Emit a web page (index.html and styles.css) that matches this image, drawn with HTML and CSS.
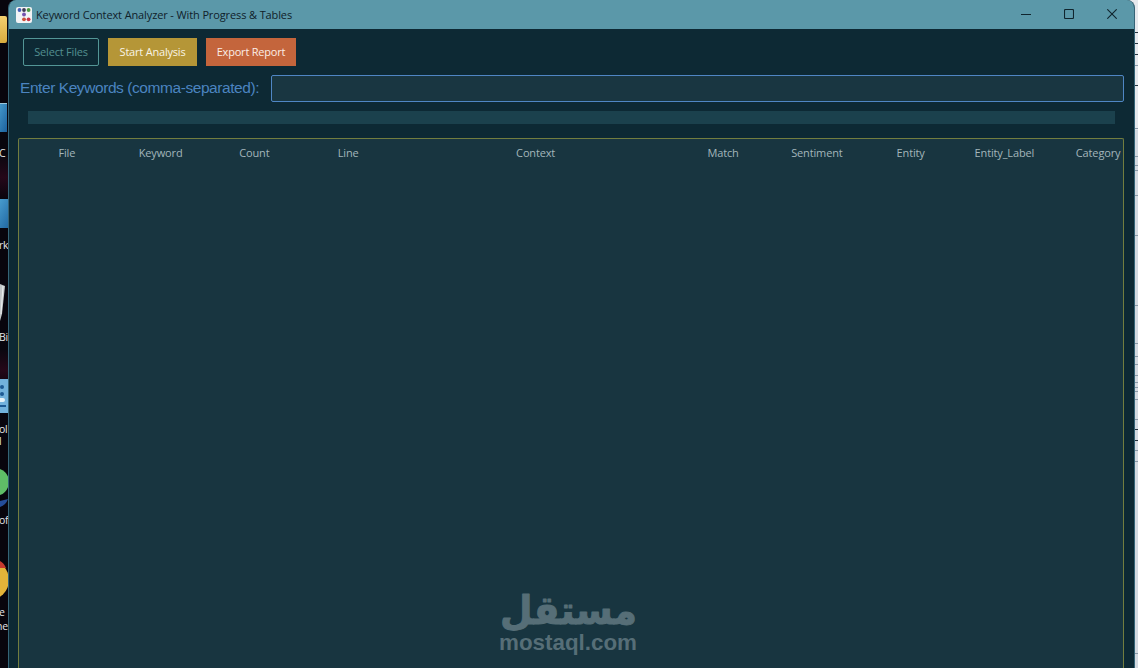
FILE: index.html
```html
<!DOCTYPE html>
<html lang="en">

<head>
    <meta charset="UTF-8">
    <meta name="viewport" content="width=device-width, initial-scale=1.0">
    <title>Keyword Context Analyzer</title>
    <link rel="stylesheet" href="styles.css">
</head>

<body>
    <div class="desktop">
        <!-- Desktop icons, mostly hidden behind the window -->
        <svg class="shortcuts" width="12" height="668" viewBox="0 0 12 668">
            <defs>
                <linearGradient id="folder" x1="0" y1="0" x2="0" y2="1">
                    <stop offset="0" stop-color="#f3d070" />
                    <stop offset="1" stop-color="#d9ab3e" />
                </linearGradient>
                <linearGradient id="screen" x1="0" y1="0" x2="1" y2="1">
                    <stop offset="0" stop-color="#4ea5d5" />
                    <stop offset="1" stop-color="#1c619d" />
                </linearGradient>
                <linearGradient id="glow" x1="0" y1="0" x2="0" y2="1">
                    <stop offset="0" stop-color="#0b0810" />
                    <stop offset=".5" stop-color="#250819" />
                    <stop offset="1" stop-color="#08050d" />
                </linearGradient>
            </defs>
            <rect y="155" width="12" height="45" fill="url(#glow)" />
            <rect y="350" width="12" height="40" fill="url(#glow)" />
            <rect x="-4" y="16" width="11" height="27" rx="2" fill="url(#folder)" />
            <rect x="-4" y="103" width="11" height="29" fill="url(#screen)" />
            <path d="M0 103.500H7" stroke="#9cc7dc" />
            <rect x="-4" y="199" width="16" height="29" fill="url(#screen)" />
            <path d="M0 284L5 286L2 314L0 321Z" fill="#c2c6c8" />
            <path d="M3 286L1 314" stroke="#ecefef" />
            <rect x="-4" y="379" width="16" height="34" fill="#72b2dc" />
            <g fill="#1d5a93">
                <circle cx="2" cy="387" r="2" />
                <circle cx="2" cy="394" r="2" />
                <rect y="405" width="6" height="2" />
            </g>
            <rect x="-2" y="398" width="7" height="4" rx="2" fill="#e5f1f6" />
            <circle cx="-5" cy="482" r="14" fill="#5fbd67" />
            <path d="M0 501L8 499Q6 505 0 507Z" fill="#244d9a" />
            <circle cx="-11" cy="580" r="20" fill="#e3b439" />
            <path d="M0 561Q4 563 6 568H0Z" fill="#c7392e" />
            <g class="shortcut-label">
                <text x="-1" y="157">C</text>
                <text x="-1" y="249">rk</text>
                <text x="-1" y="341">Bi</text>
                <text x="-1" y="433">ol</text>
                <text x="-1" y="445">l</text>
                <text x="-1" y="524">of</text>
                <text x="-1" y="616">e</text>
                <text x="-4" y="630">ne</text>
            </g>
        </svg>

        <main class="window">
            <header class="titlebar">
                <svg class="app-icon" width="16" height="16" viewBox="0 0 16 16">
                    <rect width="16" height="16" rx="2" fill="#f2f3f5" />
                    <circle cx="3.500" cy="3" r="1.900" fill="#4860b5" />
                    <circle cx="8" cy="3" r="1.900" fill="#3f3b55" />
                    <circle cx="12.600" cy="3" r="1.900" fill="#4b9a43" />
                    <circle cx="8" cy="7.500" r="1.900" fill="#7452ae" />
                    <circle cx="8" cy="12.300" r="1.900" fill="#cd513c" />
                    <circle cx="12.600" cy="12.300" r="1.900" fill="#c83246" />
                </svg>
                <h1 class="title">Keyword Context Analyzer - With Progress &amp; Tables</h1>
                <div class="controls">
                    <svg width="10" height="10" viewBox="0 0 10 10"><path d="M0 5.500H10" /></svg>
                    <svg width="10" height="10" viewBox="0 0 10 10"><rect x=".5" y=".5" width="9" height="9" rx="1" /></svg>
                    <svg width="10" height="10" viewBox="0 0 10 10"><path d="M.3 .3L9.700 9.700M9.700 .3L.3 9.700" /></svg>
                </div>
            </header>

            <div class="toolbar">
                <button class="btn btn-select">Select Files</button>
                <button class="btn btn-start">Start Analysis</button>
                <button class="btn btn-export">Export Report</button>
            </div>

            <div class="keywords">
                <label class="keywords-label" for="keywords">Enter Keywords (comma-separated):</label>
                <input class="keywords-input" id="keywords" type="text">
            </div>

            <div class="progress"></div>

            <section class="results">
                <div class="results-head">
                    <span>File</span>
                    <span>Keyword</span>
                    <span>Count</span>
                    <span>Line</span>
                    <span>Context</span>
                    <span>Match</span>
                    <span>Sentiment</span>
                    <span>Entity</span>
                    <span>Entity_Label</span>
                    <span>Category</span>
                </div>
            </section>
        </main>

        <!-- Edge of the document behind the window -->
        <svg class="behind" width="3" height="668" viewBox="0 0 3 668">
            <rect width="4" height="668" fill="#d3dae1" />
            <rect width="4" height="130" fill="#e6e9ed" />
            <g fill="#26343f">
                <rect y="32" width="4" height="1" />
                <rect y="43" width="4" height="1" />
                <rect y="54" width="4" height="1" />
                <rect y="85" width="4" height="1" />
                <rect y="429" width="4" height="1" />
                <rect y="440" width="4" height="1" />
            </g>
            <g fill="#8b9aa8">
                <rect y="65" width="4" height="1" />
                <rect y="128" width="4" height="1" />
                <rect y="156" width="4" height="1" />
                <rect y="165" width="4" height="1" />
                <rect y="170" width="4" height="1" />
                <rect y="195" width="4" height="1" />
                <rect y="235" width="4" height="1" />
                <rect y="305" width="4" height="1" />
                <rect y="343" width="4" height="1" />
                <rect y="356" width="4" height="1" />
                <rect y="364" width="4" height="1" />
                <rect y="375" width="4" height="1" />
                <rect y="382" width="4" height="1" />
                <rect y="387" width="4" height="1" />
                <rect y="391" width="4" height="1" />
                <rect y="399" width="4" height="1" />
                <rect y="419" width="4" height="1" />
                <rect y="450" width="4" height="1" />
                <rect y="461" width="4" height="1" />
                <rect y="653" width="4" height="1" />
            </g>
        </svg>
    </div>

    <svg class="watermark" width="144" height="76" viewBox="0 0 144 76">
        <text class="watermark-ar" transform="translate(72.500 36) scale(1 .86)" text-anchor="middle" direction="rtl" textLength="137" lengthAdjust="spacingAndGlyphs">مستقل</text>
        <text class="watermark-en" x="3" y="62" textLength="138" lengthAdjust="spacingAndGlyphs">mostaql.com</text>
    </svg>
</body>

</html>
```
FILE: styles.css
```css
* {
    box-sizing: border-box;
}

body {
    margin: 0;
    height: 100vh;
    overflow: hidden;
    font-family: "Open Sans", "Noto Sans", sans-serif;
    background-color: #08050d;
}

.desktop {
    display: flex;
    height: 668px;
    background: linear-gradient(to right, #08050d 50%, #e6e9ed 50%);
}

.shortcuts {
    flex: none;
    margin-right: -4px;
}

.shortcut-label {
    font-size: 10.5px;
    letter-spacing: -0.3px;
    fill: #e4e4e8;
}

/* Window */
.window {
    position: relative;
    flex: 1;
    min-width: 0;
    display: flex;
    flex-direction: column;
    border: 1px solid #356477;
    border-top: 0;
    border-bottom: 0;
    border-radius: 8px 8px 0 0;
    overflow: hidden;
    background-color: #0d2934;
}

.titlebar {
    flex: none;
    display: flex;
    align-items: center;
    height: 29px;
    padding: 0 17px 0 7px;
    background-color: #5b98a9;
}

.title {
    margin: 0 auto 0 4px;
    font-size: 11px;
    font-weight: 400;
    letter-spacing: -0.12px;
    color: #10212a;
    white-space: nowrap;
}

.controls {
    display: flex;
    gap: 33px;
    padding-bottom: 1px;
}

.controls svg {
    fill: none;
    stroke: #10252e;
    stroke-width: 1.1;
}

.toolbar {
    display: flex;
    gap: 9px;
    padding: 9px 14px 0;
}

.btn {
    height: 28px;
    padding: 0 0 2px;
    border: 1px solid;
    font-family: inherit;
    font-size: 11px;
    letter-spacing: -0.2px;
    white-space: nowrap;
}

.btn-select {
    width: 76px;
    border-color: #539696;
    border-radius: 2px;
    background-color: transparent;
    color: #539090;
}

.btn-start {
    width: 89px;
    border-color: #b59637;
    background-color: #b59637;
    color: #f8f4e6;
}

.btn-export {
    width: 90px;
    border-color: #c4653c;
    background-color: #c4653c;
    color: #fbeee7;
}

.keywords {
    display: flex;
    align-items: center;
    margin: 9px 10px 0 11px;
}

.keywords-label {
    width: 251px;
    padding-bottom: 1px;
    font-family: "Liberation Sans", Arial, sans-serif;
    font-size: 15.5px;
    letter-spacing: -0.43px;
    color: #4b84c0;
    white-space: nowrap;
}

.keywords-input {
    flex: 1;
    height: 27px;
    border: 1px solid #4f86c4;
    border-radius: 2px;
    background-color: #193641;
    outline: none;
}

.progress {
    height: 13px;
    margin: 9px 19px 0 19px;
    background-color: #1b414d;
}

/* Results table */
.results {
    flex: 1;
    margin: 14px 10px 0 9px;
    border: 1px solid #727d3f;
    border-bottom: 0;
    border-radius: 2px 2px 0 0;
    background-color: #183540;
    overflow: hidden;
}

.results-head {
    display: grid;
    grid-template-columns: repeat(4, 93.75px) 281.25px repeat(5, 93.75px);
    width: 1125px;
    margin-left: 1px;
    line-height: 28px;
    font-size: 11px;
    letter-spacing: -0.15px;
    text-align: center;
    color: #a3b6bb;
}

.behind {
    flex: none;
}

/* Watermark over the page */
.watermark {
    position: absolute;
    left: 496px;
    top: 588px;
    fill: #566e77;
}

.watermark-ar {
    font-family: "DejaVu Sans", sans-serif;
    font-size: 46px;
    font-weight: 700;
    stroke: #566e77;
    stroke-width: 1.2;
    stroke-linejoin: round;
}

.watermark-en {
    font-family: "Liberation Sans", Arial, sans-serif;
    font-size: 22px;
    font-weight: 700;
}
```
